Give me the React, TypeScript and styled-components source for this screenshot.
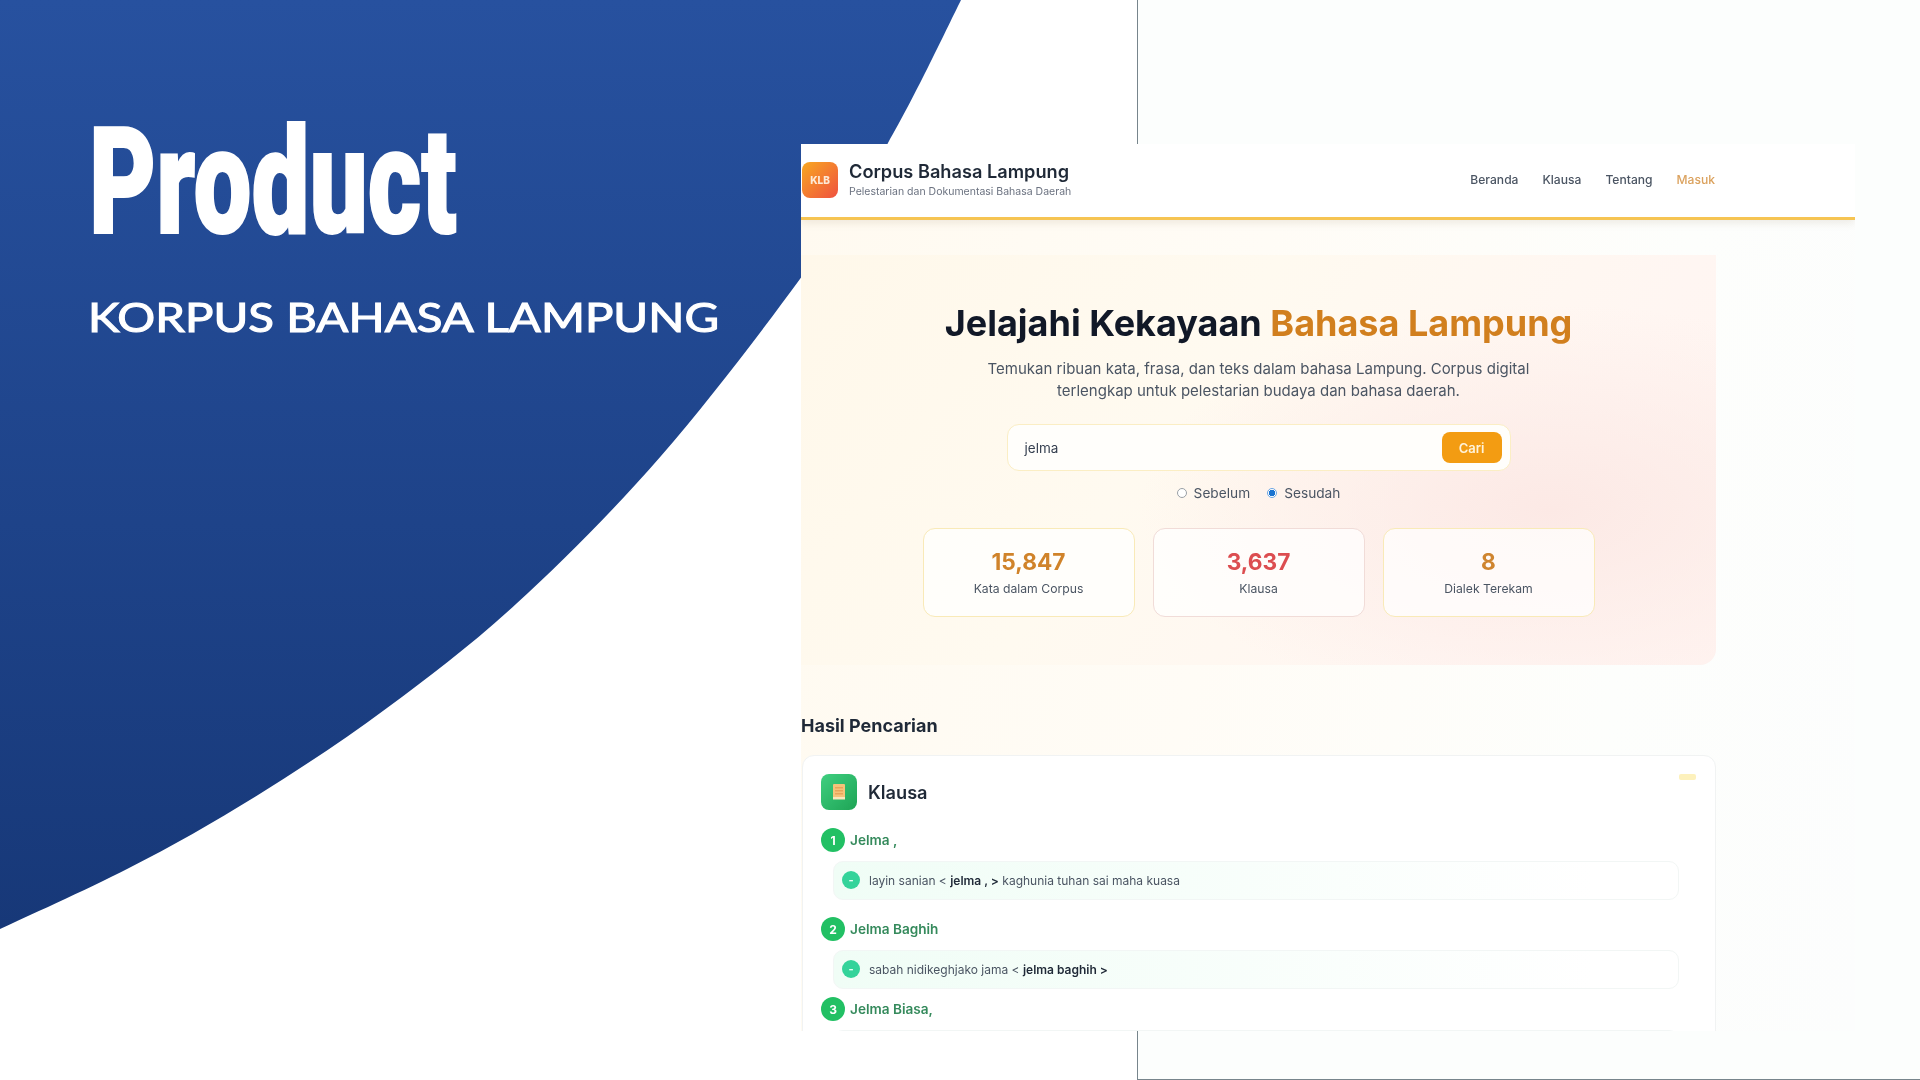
import React from "react";
import styled, { createGlobalStyle } from "styled-components";

const Global = createGlobalStyle`
  html, body { margin: 0; padding: 0; background: #fff; }
  * { box-sizing: border-box; }
`;

const Slide = styled.div`
  position: relative;
  width: 1920px;
  height: 1080px;
  overflow: hidden;
  background: #fff;
  display: flex;
  font-family: Inter, "Liberation Sans", sans-serif;
`;

const BlueShape = styled.svg`
  position: absolute;
  left: 0;
  top: 0;
`;

const Backdrop = styled.div`
  position: absolute;
  left: 1137px;
  top: 0;
  width: 783px;
  height: 1080px;
  background: #fcfefd;
  border-left: 1px solid #77858c;
  border-bottom: 1px solid #77858c;
`;

const Intro = styled.div`
  position: relative;
  width: 801px;
  flex: none;
  padding: 94px 0 0 89px;
  color: #fff;
`;

const Headline = styled.h1`
  margin: 0;
  font-family: Roboto, "Liberation Sans", sans-serif;
  font-weight: 900;
  font-size: 148px;
  line-height: 178px;
  display: inline-block;
  transform-origin: left center;
  transform: scaleX(0.697);
  -webkit-text-stroke: 2px #fff;
  white-space: nowrap;
`;

const Subhead = styled.div`
  margin: 21px 0 0 -1px;
  font-family: Lato, "Liberation Sans", sans-serif;
  font-weight: 400;
  font-size: 40px;
  line-height: 48px;
  white-space: nowrap;
  transform-origin: left center;
  transform: scaleX(1.185);
  -webkit-text-stroke: 1.1px #fff;
`;

const Shot = styled.div`
  position: relative;
  width: 1054px;
  height: 887px;
  margin-top: 144px;
  flex: none;
  overflow: hidden;
  filter: blur(0.45px);
  background: linear-gradient(100deg, #fffaf0 0%, #fffcf6 40%, #fdfefc 75%, #fcfdfd 100%);
`;

const Header = styled.header`
  height: 76px;
  background: #fff;
  border-bottom: 3px solid #f6c452;
  box-shadow: 0 3px 8px rgba(120, 100, 60, 0.12);
  position: relative;
`;

const HeaderInner = styled.div`
  width: 915px;
  height: 71px;
  padding-right: 1px;
  display: flex;
  align-items: center;
  justify-content: space-between;
`;

const Brand = styled.div`
  display: flex;
  align-items: center;
  gap: 11px;
  padding-left: 1px;
`;

const BrandMark = styled.div`
  width: 36px;
  height: 36px;
  border-radius: 8px;
  background: linear-gradient(135deg, #f8a821, #ef5140);
  color: #fde9d6;
  display: flex;
  align-items: center;
  justify-content: center;
  font-size: 10px;
  font-weight: 800;
`;

const BrandTitle = styled.div`
  font-size: 18.2px;
  line-height: 22px;
  font-weight: 600;
  color: #1f2937;
`;

const BrandSub = styled.div`
  font-size: 10.5px;
  line-height: 15px;
  margin-top: 2px;
  color: #6b7280;
`;

const Nav = styled.nav`
  display: flex;
  gap: 24px;
`;

const NavLink = styled.a<{ $accent?: boolean }>`
  font-size: 12.1px;
  font-weight: 500;
  color: ${(p) => (p.$accent ? "#dba25e" : "#4b5563")};
`;

const Content = styled.main`
  width: 915px;
  padding-top: 35px;
`;

const Hero = styled.section`
  height: 410px;
  border-radius: 0 0 16px 0;
  background:
    radial-gradient(ellipse 45% 50% at 82% 62%, #fce9e5 0%, rgba(252, 233, 229, 0) 100%),
    linear-gradient(125deg, #fff8ea 0%, #fffaf0 40%, #fff6f2 75%, #fff4f1 100%);
  display: flex;
  flex-direction: column;
  align-items: center;
  padding-top: 46px;
`;

const HeroTitle = styled.h2`
  margin: 0;
  font-size: 36px;
  line-height: 44px;
  font-weight: 700;
  color: #111827;
`;

const Accent = styled.span`
  color: #d17f1e;
`;

const HeroText = styled.p`
  margin: 13px 0 0;
  width: 600px;
  text-align: center;
  font-size: 15px;
  line-height: 21.5px;
  color: #4b5563;
`;

const Search = styled.div`
  margin-top: 23px;
  width: 504px;
  height: 47px;
  border: 1px solid #fbeec4;
  border-radius: 12px;
  background: #fffefb;
  display: flex;
  align-items: center;
  justify-content: space-between;
  padding: 0 8px 0 17px;
  font-size: 13.5px;
  color: #374151;
`;

const SearchButton = styled.button`
  width: 60px;
  height: 31px;
  border: none;
  border-radius: 8px;
  background: #f39c12;
  color: #fff3da;
  font-family: inherit;
  font-size: 13px;
  font-weight: 600;
`;

const Radios = styled.div`
  margin-top: 13px;
  display: flex;
  align-items: center;
  gap: 17px;
  font-size: 13.7px;
  line-height: 18px;
  color: #4b5563;
`;

const RadioOption = styled.label`
  display: flex;
  align-items: center;
  gap: 7px;
`;

const RadioDot = styled.span<{ $on?: boolean }>`
  width: 10px;
  height: 10px;
  border-radius: 50%;
  background: ${(p) => (p.$on ? "radial-gradient(circle, #1a73d0 0 55%, #fff 60%)" : "#fff")};
  border: ${(p) => (p.$on ? "1px solid #6ba6e4" : "1px solid #9aa0a6")};
`;

const Stats = styled.div`
  margin-top: 26px;
  display: flex;
  gap: 18px;
`;

const StatCard = styled.div<{ $border: string }>`
  width: 212px;
  height: 89px;
  border-radius: 12px;
  border: 1px solid ${(p) => p.$border};
  background: rgba(255, 255, 255, 0.72);
  display: flex;
  flex-direction: column;
  align-items: center;
  padding-top: 18px;
`;

const StatValue = styled.div<{ $color: string }>`
  font-size: 22.7px;
  line-height: 30px;
  font-weight: 700;
  color: ${(p) => p.$color};
`;

const StatLabel = styled.div`
  margin-top: 4px;
  font-size: 12.2px;
  line-height: 16px;
  color: #4b5563;
`;

const SectionTitle = styled.h3`
  margin: 50px 0 18px 0;
  font-size: 18px;
  line-height: 22px;
  font-weight: 700;
  color: #1f2937;
`;

const ResultCard = styled.section`
  position: relative;
  height: 400px;
  margin-left: 1px;
  border: 1px solid #f1f3f3;
  border-radius: 12px;
  background: #fff;
  padding: 18px 0 0 18px;
`;

const MiniBadge = styled.span`
  position: absolute;
  right: 19px;
  top: 18px;
  width: 17px;
  height: 6px;
  border-radius: 2px;
  background: #fdf1bc;
`;

const CardHead = styled.div`
  display: flex;
  align-items: center;
  gap: 11px;
  margin-bottom: 18px;
`;

const CardIcon = styled.div`
  width: 36px;
  height: 36px;
  border-radius: 8px;
  background: linear-gradient(135deg, #3fcf80, #1ea455);
  display: flex;
  align-items: center;
  justify-content: center;
`;

const CardTitle = styled.div`
  font-size: 18.2px;
  line-height: 24px;
  font-weight: 600;
  padding-bottom: 1px;
  color: #1f2937;
`;

const Entry = styled.div<{ $gap: number }>`
  margin-bottom: ${(p) => p.$gap}px;
`;

const EntryHead = styled.div`
  display: flex;
  align-items: center;
  gap: 5px;
  margin-bottom: 9px;
`;

const EntryNum = styled.span`
  width: 24px;
  height: 24px;
  border-radius: 50%;
  background: #22c064;
  color: #fff;
  font-size: 12px;
  font-weight: 700;
  display: flex;
  align-items: center;
  justify-content: center;
`;

const EntryWord = styled.span`
  font-size: 13.6px;
  font-weight: 600;
  color: #358a5c;
`;

const Example = styled.div`
  margin-left: 12px;
  width: 846px;
  height: 39px;
  padding: 0 0 1px 8px;
  border: 1px solid #f2f6f5;
  border-radius: 10px;
  background: linear-gradient(90deg, #f0fdf6, #fff 90%);
  display: flex;
  align-items: center;
  gap: 9px;
  font-size: 12px;
  color: #4b5563;
`;

const Dash = styled.span`
  width: 18px;
  height: 18px;
  border-radius: 50%;
  background: #34d39a;
  color: #e8fff5;
  font-size: 11px;
  font-weight: 700;
  display: flex;
  align-items: center;
  justify-content: center;
`;

const Strong = styled.b`
  font-weight: 600;
  color: #1f2937;
`;

const entries = [
  { n: 1, word: "Jelma ,", gap: 17, before: "layin sanian < ", strong: "jelma , >", after: " kaghunia tuhan sai maha kuasa" },
  { n: 2, word: "Jelma Baghih", gap: 8, before: "sabah nidikeghjako jama < ", strong: "jelma baghih >", after: "" },
  { n: 3, word: "Jelma Biasa,", gap: 0, before: "", strong: "", after: "" },
];

export default function App() {
  return (
    <Slide>
      <Global />
      <BlueShape width="1920" height="1080" viewBox="0 0 1920 1080">
        <defs>
          <linearGradient id="blue" x1="0" y1="0" x2="0" y2="1">
            <stop offset="0" stopColor="#27519f" />
            <stop offset="1" stopColor="#173878" />
          </linearGradient>
        </defs>
        <path
          d="M0 0H961C949 24 915 96.5 888 143C861 189.5 838 227 800 279C762 331 708 402 661 456C614 510 562 562 516 604C470 646 430 676 387 708C344 740 301 768 258 795C215 822 172 846 129 868C86 890 21.5 919 0 929Z"
          fill="url(#blue)"
        />
      </BlueShape>
      <Backdrop />
      <Intro>
        <Headline>Product</Headline>
        <Subhead>KORPUS BAHASA LAMPUNG</Subhead>
      </Intro>
      <Shot>
        <Header>
          <HeaderInner>
            <Brand>
              <BrandMark>KLB</BrandMark>
              <div>
                <BrandTitle>Corpus Bahasa Lampung</BrandTitle>
                <BrandSub>Pelestarian dan Dokumentasi Bahasa Daerah</BrandSub>
              </div>
            </Brand>
            <Nav>
              <NavLink>Beranda</NavLink>
              <NavLink>Klausa</NavLink>
              <NavLink>Tentang</NavLink>
              <NavLink $accent>Masuk</NavLink>
            </Nav>
          </HeaderInner>
        </Header>
        <Content>
          <Hero>
            <HeroTitle>
              Jelajahi Kekayaan <Accent>Bahasa Lampung</Accent>
            </HeroTitle>
            <HeroText>
              Temukan ribuan kata, frasa, dan teks dalam bahasa Lampung. Corpus digital terlengkap untuk pelestarian budaya dan bahasa daerah.
            </HeroText>
            <Search>
              <span>jelma</span>
              <SearchButton>Cari</SearchButton>
            </Search>
            <Radios>
              <RadioOption><RadioDot />Sebelum</RadioOption>
              <RadioOption><RadioDot $on />Sesudah</RadioOption>
            </Radios>
            <Stats>
              <StatCard $border="#f9eab8">
                <StatValue $color="#d0832a">15,847</StatValue>
                <StatLabel>Kata dalam Corpus</StatLabel>
              </StatCard>
              <StatCard $border="#f1dcd8">
                <StatValue $color="#dc4d50">3,637</StatValue>
                <StatLabel>Klausa</StatLabel>
              </StatCard>
              <StatCard $border="#f9eab8">
                <StatValue $color="#cf8530">8</StatValue>
                <StatLabel>Dialek Terekam</StatLabel>
              </StatCard>
            </Stats>
          </Hero>
          <SectionTitle>Hasil Pencarian</SectionTitle>
          <ResultCard>
            <MiniBadge />
            <CardHead>
              <CardIcon>
                <svg width="14" height="18" viewBox="0 0 14 18">
                  <rect x="1" y="1" width="12" height="15" rx="1" fill="#f6c37a" />
                  <rect x="3" y="4" width="8" height="1.5" fill="#e9a55a" />
                  <rect x="3" y="7" width="8" height="1.5" fill="#e9a55a" />
                  <rect x="3" y="10" width="8" height="1.5" fill="#e9a55a" />
                  <rect x="1" y="14" width="12" height="2.5" fill="#fbe7bd" />
                </svg>
              </CardIcon>
              <CardTitle>Klausa</CardTitle>
            </CardHead>
            {entries.map((e) => (
              <Entry key={e.n} $gap={e.gap}>
                <EntryHead>
                  <EntryNum>{e.n}</EntryNum>
                  <EntryWord>{e.word}</EntryWord>
                </EntryHead>
                <Example>
                  {e.strong && <Dash>-</Dash>}
                  {e.strong && (
                    <span>
                      {e.before}
                      <Strong>{e.strong}</Strong>
                      {e.after}
                    </span>
                  )}
                </Example>
              </Entry>
            ))}
          </ResultCard>
        </Content>
      </Shot>
    </Slide>
  );
}
